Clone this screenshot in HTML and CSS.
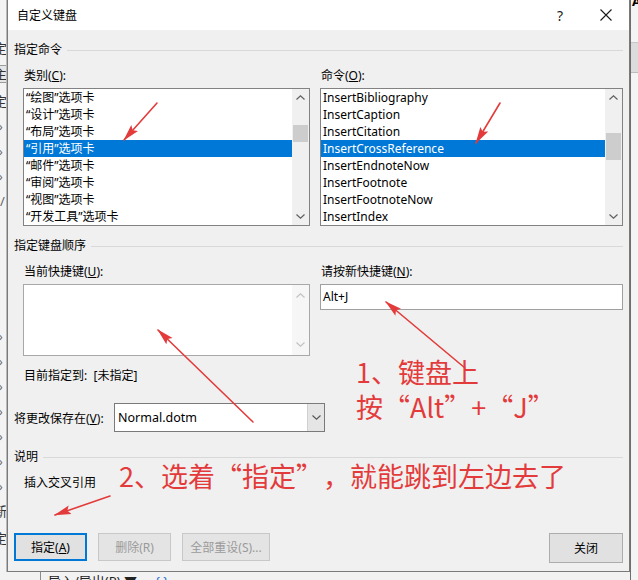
FILE: index.html
```html
<!DOCTYPE html>
<html lang="zh-CN">
<head>
<meta charset="utf-8">
<title>自定义键盘</title>
<link rel="stylesheet" href="styles.css">
</head>
<body>
<div class="screen">
  <div class="bg-left">
    <div class="bl r-a">定</div>
    <div class="bl r-b">主</div>
    <div class="bl r-c">定</div>
    <div class="bl r-d">›</div>
    <div class="bl r-d">›</div>
    <div class="bl r-d">›</div>
    <div class="bl r-e">/</div>
    <div class="bl r-gap"></div>
    <div class="bl r-d">›</div>
    <div class="bl r-d">›</div>
    <div class="bl r-d">›</div>
    <div class="bl r-d">›</div>
    <div class="bl r-d">›</div>
    <div class="bl r-d">›</div>
    <div class="bl r-d">›</div>
    <div class="bl r-f">新</div>
    <div class="bl r-f">定</div>
  </div>

  <div class="dialog">
    <div class="titlebar">
      <span class="title">自定义键盘</span>
      <span class="tb-btn help">?</span>
      <span class="tb-btn close"><svg width="12" height="12" viewBox="0 0 12 12"><path d="M0.5 0.5L11.5 11.5M11.5 0.5L0.5 11.5" stroke="#1a1a1a" stroke-width="1.1" fill="none"/></svg></span>
    </div>

    <div class="body">
      <div class="ghead g1">指定命令</div>
      <div class="cols c1">
        <div class="col">
          <div class="lbl">类别(<u>C</u>):</div>
          <div class="listbox">
            <div class="items">
              <div class="item">“绘图”选项卡</div>
              <div class="item">“设计”选项卡</div>
              <div class="item">“布局”选项卡</div>
              <div class="item sel">“引用”选项卡</div>
              <div class="item">“邮件”选项卡</div>
              <div class="item">“审阅”选项卡</div>
              <div class="item">“视图”选项卡</div>
              <div class="item">“开发工具”选项卡</div>
            </div>
            <div class="vscroll">
              <div class="sb-btn"><svg width="9" height="5" viewBox="0 0 9 5"><path d="M0.5 4.5L4.5 0.8L8.5 4.5" stroke="#606060" stroke-width="1.2" fill="none"/></svg></div>
              <div class="sb-track"><div class="thumb thumb-l"></div></div>
              <div class="sb-btn"><svg width="9" height="5" viewBox="0 0 9 5"><path d="M0.5 0.5L4.5 4.2L8.5 0.5" stroke="#606060" stroke-width="1.2" fill="none"/></svg></div>
            </div>
          </div>
        </div>
        <div class="col">
          <div class="lbl">命令(<u>O</u>):</div>
          <div class="listbox">
            <div class="items">
              <div class="item">InsertBibliography</div>
              <div class="item">InsertCaption</div>
              <div class="item">InsertCitation</div>
              <div class="item sel">InsertCrossReference</div>
              <div class="item">InsertEndnoteNow</div>
              <div class="item">InsertFootnote</div>
              <div class="item">InsertFootnoteNow</div>
              <div class="item">InsertIndex</div>
            </div>
            <div class="vscroll">
              <div class="sb-btn"><svg width="9" height="5" viewBox="0 0 9 5"><path d="M0.5 4.5L4.5 0.8L8.5 4.5" stroke="#606060" stroke-width="1.2" fill="none"/></svg></div>
              <div class="sb-track"><div class="thumb thumb-r"></div></div>
              <div class="sb-btn"><svg width="9" height="5" viewBox="0 0 9 5"><path d="M0.5 0.5L4.5 4.2L8.5 0.5" stroke="#606060" stroke-width="1.2" fill="none"/></svg></div>
            </div>
          </div>
        </div>
      </div>

      <div class="ghead g2">指定键盘顺序</div>
      <div class="cols c2">
        <div class="col">
          <div class="lbl">当前快捷键(<u>U</u>):</div>
          <div class="keybox">
            <div class="kb-body"></div>
            <div class="vscroll disabled">
              <div class="sb-btn"><svg width="9" height="5" viewBox="0 0 9 5"><path d="M0.5 4.5L4.5 0.8L8.5 4.5" stroke="#c2c2c2" stroke-width="1.2" fill="none"/></svg></div>
              <div class="sb-track"></div>
              <div class="sb-btn"><svg width="9" height="5" viewBox="0 0 9 5"><path d="M0.5 0.5L4.5 4.2L8.5 0.5" stroke="#c2c2c2" stroke-width="1.2" fill="none"/></svg></div>
            </div>
          </div>
        </div>
        <div class="col">
          <div class="lbl">请按新快捷键(<u>N</u>):</div>
          <div class="textinput">Alt+J</div>
        </div>
      </div>

      <div class="assigned">目前指定到:&nbsp; [未指定]</div>

      <div class="save-row">
        <span class="save-lbl">将更改保存在(<u>V</u>):</span>
        <div class="select">
          <span class="sel-val">Normal.dotm</span>
          <span class="sel-dd"><svg width="9" height="5" viewBox="0 0 9 5"><path d="M0.5 0.5L4.5 4.2L8.5 0.5" stroke="#555" stroke-width="1.1" fill="none"/></svg></span>
        </div>
      </div>

      <div class="ghead g3">说明</div>
      <div class="desc">插入交叉引用</div>

      <div class="buttons">
        <div class="btn default">指定(<u>A</u>)</div>
        <div class="btn disabled">删除(R)</div>
        <div class="btn disabled wide">全部重设(S)...</div>
        <div class="btn closebtn">关闭</div>
      </div>
    </div>
  </div>

  <div class="bg-right">
    <div class="br-top">A</div>
    <div class="br-band"></div>
    <div class="br-rest"></div>
  </div>

  <div class="bg-bottom">
    <span class="bb-line"></span>
    <span class="bb-text">导入/导出(P) ▼</span>
    <span class="bb-brace">{ }</span>
  </div>

  <svg class="arrows" width="638" height="580" viewBox="0 0 638 580">
    <defs>
      <marker id="ah" markerWidth="17" markerHeight="10" refX="16" refY="5" orient="auto" markerUnits="userSpaceOnUse">
        <path d="M0,0.5 L17,5 L0,9.5 L3,5 z" fill="#e33b3b"/>
      </marker>
    </defs>
    <g stroke="#e33b3b" stroke-width="1.6" fill="none" stroke-linecap="round">
      <line x1="157" y1="103" x2="124" y2="140" marker-end="url(#ah)"/>
      <line x1="500" y1="103" x2="476" y2="143" marker-end="url(#ah)"/>
      <line x1="253" y1="422" x2="158" y2="330" marker-end="url(#ah)"/>
      <line x1="465" y1="368" x2="386" y2="302" marker-end="url(#ah)"/>
      <line x1="110" y1="496" x2="55" y2="515" marker-end="url(#ah)"/>
    </g>
  </svg>

  <div class="note note1">1、键盘上</div>
  <div class="note note1b">按“Alt”+“J”</div>
  <div class="note note2">2、选着“指定”，就能跳到左边去了</div>
</div>
</body>
</html>
```

FILE: styles.css
```css
* { box-sizing: border-box; }
html, body { margin: 0; padding: 0; }
body {
  width: 638px;
  height: 580px;
  overflow: hidden;
  background: #f0f0f0;
  font-family: "Noto Sans", "Noto Sans CJK SC", sans-serif;
  font-size: 12px;
  color: #000;
}
u { text-decoration: underline; text-underline-offset: 1px; }

.screen {
  position: relative;
  width: 638px;
  height: 580px;
  overflow: hidden;
  display: grid;
  grid-template-columns: 7px 623px 8px;
  grid-template-rows: 572px 8px;
}

/* background app bits */
.bg-left {
  grid-row: 1; grid-column: 1;
  background: #f3f3f3;
  overflow: hidden;
  display: flex; flex-direction: column;
  border-right: 1px solid #b9b9b9;
}
.bl { height: 25px; line-height: 25px; font-size: 13px; color: #333; margin-left: -6px; white-space: nowrap; }
.r-a { margin-top: 36px; }
.r-b { border-top: 1px solid #9a9a9a; border-bottom: 1px solid #9a9a9a; height: 18px; line-height: 16px; margin-top: 4px; background: #e6e6e6; }
.r-c { margin-top: 6px; }
.r-d { margin-left: -1px; font-size: 12px; color: #666; }
.r-e { margin-left: 0; color: #666; }
.r-gap { height: 110px; }
.r-f { height: 27px; }

.bg-right {
  grid-row: 1 / span 2; grid-column: 3;
  background: #f4f4f4;
  display: flex; flex-direction: column;
  border-left: 1px solid #6e6e6e;
  overflow: hidden;
}
.br-top { height: 46px; font-weight: bold; font-size: 13px; line-height: 8px; margin-top: -3px; padding-left: 1px; color: #000; border-bottom: 1px solid #c8c8c8; }
.br-band { height: 30px; background: #dcdcdc; border-bottom: 1px solid #bdbdbd; }
.br-rest { flex: 1; }

.bg-bottom {
  grid-row: 2; grid-column: 1 / span 2;
  background: #f2f2f2;
  display: flex; align-items: flex-start;
  overflow: hidden;
}
.bb-line { width: 1px; height: 8px; background: #8c8c8c; margin-left: 40px; }
.bb-text { margin-left: 7px; margin-top: 1px; font-size: 13px; line-height: 16px; color: #222; white-space: nowrap; }
.bb-brace { margin-left: 18px; margin-top: 1px; font-size: 13px; line-height: 16px; color: #2b6fd6; }

/* dialog */
.dialog {
  grid-row: 1; grid-column: 2;
  background: #f0f0f0;
  border: 1px solid #7a7a7a;
  border-top: 0;
  display: flex; flex-direction: column;
}
.titlebar {
  height: 30px;
  background: #fff;
  display: flex; align-items: center;
  padding-left: 9px;
}
.title { flex: 1; font-size: 12px; }
.tb-btn { width: 46px; height: 30px; display: flex; align-items: center; justify-content: center; }
.help { font-size: 14px; color: #1a1a1a; }

.body { flex: 1; padding: 0 6px; display: flex; flex-direction: column; }

.ghead {
  height: 16px; line-height: 16px;
  display: flex; align-items: center; gap: 5px;
  white-space: nowrap;
}
.ghead::after { content: ""; flex: 1; height: 1px; background: #d8d8d8; }
.g1 { margin-top: 12px; }
.g2 { margin-top: 12px; }
.g3 { margin-top: 17px; }

.cols {
  display: grid;
  grid-template-columns: 287px 303px;
  column-gap: 10px;
  padding-left: 9px;
  margin-top: 10px;
}
.col { display: flex; flex-direction: column; }
.lbl { height: 16px; line-height: 16px; margin-bottom: 4px; padding-left: 1px; white-space: nowrap; }

.listbox {
  height: 138px;
  border: 1px solid #828282;
  background: #fff;
  display: flex;
}
.items { flex: 1; min-width: 0; }
.item { height: 17px; line-height: 17px; padding-left: 2px; white-space: nowrap; overflow: hidden; }
.item.sel { background: #0078d7; color: #fff; }

.vscroll {
  width: 17px;
  background: #f0f0f0;
  display: flex; flex-direction: column;
}
.sb-btn { height: 17px; display: flex; align-items: center; justify-content: center; }
.sb-track { flex: 1; padding: 0 1px; }
.thumb { background: #cdcdcd; }
.thumb-l { margin-top: 19px; height: 17px; }
.thumb-r { margin-top: 27px; height: 27px; }
.vscroll.disabled .sb-btn { height: 21px; }

.keybox {
  height: 72px;
  border: 1px solid #a8a8a8;
  background: #fff;
  display: flex;
}
.kb-body { flex: 1; }
.keybox .vscroll { background: #f6f6f6; }

.textinput {
  height: 26px;
  border: 1px solid #a0a0a0;
  background: #fff;
  line-height: 24px;
  padding-left: 2px;
}

.assigned { margin-top: 12px; height: 16px; line-height: 16px; padding-left: 10px; }

.save-row { margin-top: 19px; height: 29px; display: flex; align-items: center; }
.save-lbl { width: 100px; white-space: nowrap; }
.select {
  width: 211px; height: 29px;
  border: 1px solid #7a7a7a;
  background: #fff;
  display: flex;
}
.sel-val { flex: 1; padding-left: 3px; line-height: 27px; font-size: 12.5px; }
.sel-dd { width: 17px; background: #e5e5e5; border-left: 1px solid #d0d0d0; display: flex; align-items: center; justify-content: center; }

.desc { margin-top: 10px; height: 16px; line-height: 16px; padding-left: 10px; }

.buttons { margin-top: 42px; display: flex; gap: 11px; align-items: flex-start; }
.btn {
  width: 73px; height: 28px;
  border: 1px solid #adadad;
  background: #e1e1e1;
  display: flex; align-items: center; justify-content: center;
  white-space: nowrap;
}
.btn.default { border: 2px solid #0078d7; }
.btn.disabled { color: #9a9a9a; border-color: #c8c8c8; background: #e4e4e4; }
.btn.wide { width: 88px; }
.btn.closebtn { margin-left: auto; width: 74px; height: 30px; }

/* annotations */
.arrows { position: absolute; left: 0; top: 0; pointer-events: none; }
.note {
  position: absolute;
  font-family: "Noto Sans CJK SC", sans-serif;
  color: #e33b3b;
  font-size: 27px;
  line-height: 30px;
  height: 30px;
  white-space: nowrap;
  text-spacing-trim: space-all;
}
.note1 { left: 356px; top: 357px; }
.note1b { left: 356px; top: 392px; }
.note2 { left: 119px; top: 461px; }
```
